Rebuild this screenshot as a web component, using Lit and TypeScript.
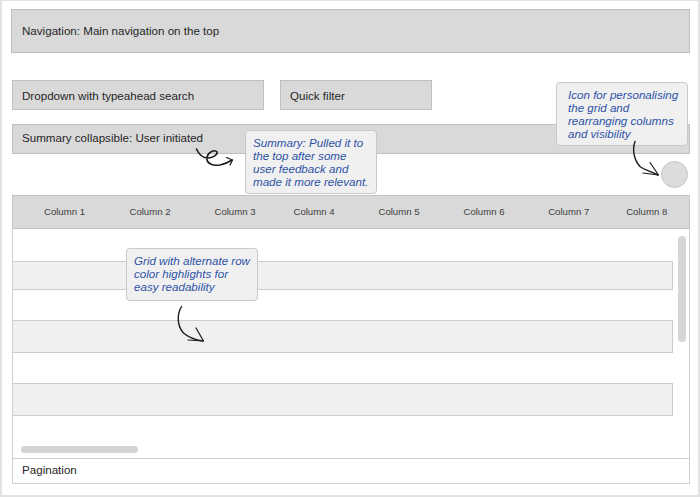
import { LitElement, html, css, svg } from "lit";
import { customElement } from "lit/decorators.js";

const columns = ["Column 1", "Column 2", "Column 3", "Column 4", "Column 5", "Column 6", "Column 7", "Column 8"];
const offsets = [21.5, 25.5, 25, 19, 25, 25, 24.7, 18];

@customElement("app-root")
export class AppRoot extends LitElement {
  static styles = css`
    :host { display: block; width: 700px; height: 497px; box-sizing: border-box; background: #fff;
      border: solid #e2e2e2; border-width: 1px 2px 2px 2px; position: relative; overflow: hidden;
      font-family: "Liberation Sans", Arial, sans-serif; color: #262626; font-size: 11.6px; }
    .page { display: flex; flex-direction: column; padding: 8px 8px 0 8px; }
    .box { background: #d9d9d9; border: 1px solid #bfbfbf; box-sizing: border-box; display: flex; align-items: center; }
    .nav { height: 44px; padding: 0 0 2px 10px; margin-left: 1px; }
    .filters { display: flex; gap: 16px; margin: 27px 0 14px 2px; }
    .dropdown { width: 252px; height: 30px; padding-left: 9px; }
    .quick { width: 152px; height: 30px; padding-left: 9px; }
    .summary { height: 30px; padding: 0 0 3px 9px; margin-left: 2px; }
    .tools { height: 41px; display: flex; justify-content: flex-end; align-items: center; padding-right: 2px; }
    .circle { width: 27px; height: 27px; border-radius: 50%; background: #dcdcdc; border: 1px solid #c4c4c4; box-sizing: border-box; }
    .grid { margin-left: 2px; border: solid #cfcfcf; border-width: 0 1px 1px 1px; display: flex; flex-direction: column; }
    .head { height: 34px; margin: 0 -1px; padding-bottom: 2px; background: #d9d9d9; border: 1px solid #c4c4c4; box-sizing: border-box; display: flex;
      font-size: 9.6px; color: #404040; align-items: center; }
    .head span { text-align: center; flex: none; width: 60px; }
    .body { height: 229px; position: relative; box-sizing: border-box; padding-top: 32px; display: flex; flex-direction: column; }
    .row { height: 29px; width: 660px; background: #f0f0f0; border: 1px solid #cdcdcd; border-left-width: 0; box-sizing: border-box; flex: none; }
    .r2 { height: 33px; margin-top: 30px; }
    .r3 { height: 33px; margin-top: 30px; }
    .vbar { position: absolute; left: 665px; top: 7px; width: 8px; height: 106px; border-radius: 4px; background: #d6d6d6; }
    .hbar { position: absolute; left: 8px; top: 217px; width: 117px; height: 7px; border-radius: 4px; background: #d3d3d3; }
    .pagination { height: 25px; border-top: 1px solid #cfcfcf; box-sizing: border-box; display: flex; align-items: center; padding: 0 0 4px 9px; }
    .note { position: absolute; box-sizing: border-box; background: #f0f0f0; border: 1px solid #c8c8c8; border-radius: 4px;
      color: #2d52a6; font-style: italic; font-size: 11.6px; line-height: 13px; padding: 5px 0 0 7px; white-space: pre-line; }
    .n1 { left: 243px; top: 129px; width: 132px; height: 64px; }
    .n2 { left: 554px; top: 81px; width: 132px; height: 64px; padding-left: 11px; }
    .n3 { left: 124px; top: 247px; width: 132px; height: 53px; }
    svg { position: absolute; left: -2px; top: -1px; width: 700px; height: 497px; pointer-events: none; }
    path { fill: none; stroke: #1c1c1c; stroke-linecap: round; stroke-linejoin: round; }
  `;

  render() {
    return html`
      <div class="page">
        <div class="box nav">Navigation: Main navigation on the top</div>
        <div class="filters">
          <div class="box dropdown">Dropdown with typeahead search</div>
          <div class="box quick">Quick filter</div>
        </div>
        <div class="box summary">Summary collapsible: User initiated</div>
        <div class="tools"><div class="circle"></div></div>
        <div class="grid">
          <div class="head">${columns.map((c, i) => html`<span style="margin-left:${offsets[i]}px">${c}</span>`)}</div>
          <div class="body">
            <div class="row"></div>
            <div class="row r2"></div>
            <div class="row r3"></div>
            <div class="vbar"></div>
            <div class="hbar"></div>
          </div>
          <div class="pagination">Pagination</div>
        </div>
      </div>
      <div class="note n1">Summary: Pulled it to
the top after some
user feedback and
made it more relevant.</div>
      <div class="note n2">Icon for personalising
the grid and
rearranging columns
and visibility</div>
      <div class="note n3">Grid with alternate row
color highlights for
easy readability</div>
      <svg viewBox="0 0 700 497">
        ${svg`<path stroke-width="1.6" d="M196.5 149 C199 155 203 158 208 158 C212 158 218 155 217 152 C215 149 208 152 207 157 C206 164 213 166 220 165 C225 164 229 162 232 160"/>
        <path stroke-width="1.3" d="M226.5 157.5 L232.5 160 L230 165"/>
        <path stroke-width="1.4" d="M635 141.5 C632 150 634 160 640 166.5 C645 170 652 172 658 175"/>
        <path stroke-width="1.2" d="M650 162.5 L658.5 175 L643 173"/>
        <path stroke-width="1.4" d="M181.5 306.5 C176 316 178 327 183.5 333 C188 337 196 340 203 341"/>
        <path stroke-width="1.2" d="M196 328 L203.5 341 L188 340"/>`}
      </svg>
    `;
  }
}
